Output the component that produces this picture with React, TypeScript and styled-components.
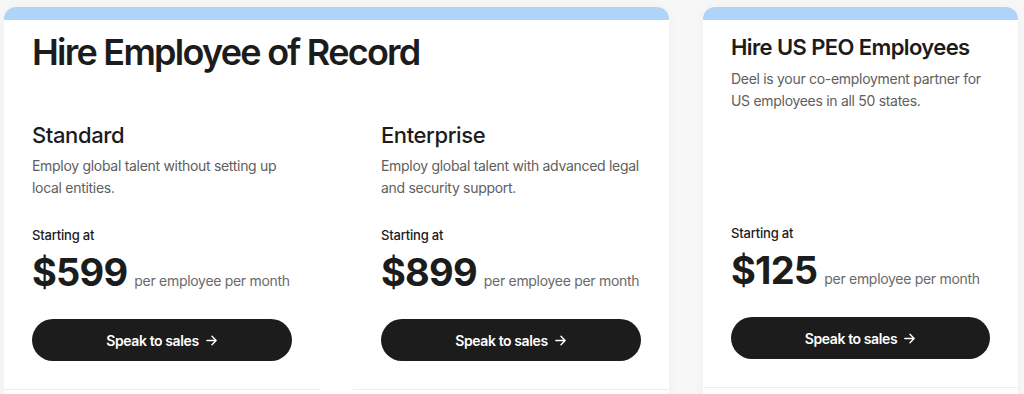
import React from "react";
import styled, { createGlobalStyle } from "styled-components";

const Global = createGlobalStyle`
  html, body { margin: 0; padding: 0; background: #f7f7f7; }
  body { font-family: Inter, "Noto Sans", sans-serif; color: #1c1c1c; -webkit-font-smoothing: antialiased; }
  * { box-sizing: border-box; }
`;

const Page = styled.div`
  display: flex;
  align-items: flex-start;
  gap: 34px;
  padding: 7px 6px 0 4px;
  height: 394px;
  overflow: hidden;
`;

const Card = styled.section<{ $w: number }>`
  width: ${(p) => p.$w}px;
  flex: none;
  background: #fff;
  border-radius: 12px 12px 0 0;
  overflow: hidden;
  box-shadow: 0 0 14px rgba(0, 0, 0, 0.035);
  padding-bottom: 40px;
`;

const Band = styled.div`
  height: 13px;
  background: #afd4f7;
`;

const BigTitle = styled.h1`
  margin: 0;
  padding: 10px 28px 0;
  font-size: 36px;
  line-height: 44px;
  font-weight: 600;
  letter-spacing: -1.75px;
  color: #1c1c1c;
`;

const Columns = styled.div`
  display: grid;
  grid-template-columns: 316px 316px;
  gap: 33px;
  margin-top: 46px;
`;

const Column = styled.div<{ $pt?: number }>`
  display: flex;
  flex-direction: column;
  padding: ${(p) => p.$pt ?? 0}px 28px 28px;
  border-bottom: 1px solid #ececec;
  height: 100%;
`;

const PlanName = styled.h2`
  margin: 0;
  font-size: 22px;
  line-height: 30px;
  font-weight: 500;
  letter-spacing: -0.4px;
  color: #1c1c1c;
`;

const Desc = styled.p`
  margin: 5px 0 0;
  font-size: 14px;
  line-height: 22px;
  letter-spacing: -0.3px;
  color: #606060;
  min-height: 44px;
`;

const Starting = styled.div<{ $mt: number }>`
  margin-top: ${(p) => p.$mt}px;
  font-size: 13px;
  line-height: 18px;
  font-weight: 500;
  letter-spacing: -0.2px;
  color: #1c1c1c;
`;

const PriceRow = styled.div`
  display: flex;
  align-items: baseline;
  gap: 7px;
  margin-top: 6px;
  white-space: nowrap;
`;

const Price = styled.span`
  font-size: 38px;
  line-height: 44px;
  font-weight: 700;
  letter-spacing: -0.8px;
  color: #1c1c1c;
`;

const Per = styled.span`
  font-size: 14px;
  letter-spacing: -0.3px;
  color: #6a6a6a;
`;

const Button = styled.button`
  margin-top: 25px;
  height: 42px;
  width: 100%;
  border: none;
  border-radius: 21px;
  background: #1c1c1c;
  color: #fff;
  font-family: Inter, sans-serif;
  font-size: 14px;
  font-weight: 600;
  letter-spacing: -0.4px;
  display: flex;
  align-items: center;
  justify-content: center;
  gap: 6px;
  cursor: pointer;
`;

const Arrow = () => (
  <svg width="13" height="13" viewBox="0 0 14 14" fill="none" stroke="#fff" strokeWidth="1.5" strokeLinecap="round" strokeLinejoin="round">
    <path d="M2 7h10M7.5 2.5 12 7l-4.5 4.5" />
  </svg>
);

const CardTitle = styled.h2`
  margin: 0;
  font-size: 22px;
  line-height: 32px;
  font-weight: 600;
  letter-spacing: -0.6px;
  color: #1c1c1c;
`;

type PlanProps = {
  name?: string;
  desc: string;
  price: string;
  mt: number;
  children?: React.ReactNode;
  pt?: number;
};

const Plan = ({ name, desc, price, mt, children, pt }: PlanProps) => (
  <Column $pt={pt}>
    {children}
    {name && <PlanName>{name}</PlanName>}
    <Desc>{desc}</Desc>
    <Starting $mt={mt}>Starting at</Starting>
    <PriceRow>
      <Price>{price}</Price>
      <Per>per employee per month</Per>
    </PriceRow>
    <Button>
      Speak to sales <Arrow />
    </Button>
  </Column>
);

export default function App() {
  return (
    <>
      <Global />
      <Page>
        <Card $w={665}>
          <Band />
          <BigTitle>Hire Employee of Record</BigTitle>
          <Columns>
            <Plan name="Standard" desc="Employ global talent without setting up local entities." price="$599" mt={27} />
            <Plan name="Enterprise" desc="Employ global talent with advanced legal and security support." price="$899" mt={27} />
          </Columns>
        </Card>
        <Card $w={315}>
          <Band />
          <Plan
            desc="Deel is your co-employment partner for US employees in all 50 states."
            price="$125"
            mt={112}
            pt={11}
          >
            <CardTitle>Hire US PEO Employees</CardTitle>
          </Plan>
        </Card>
      </Page>
    </>
  );
}
